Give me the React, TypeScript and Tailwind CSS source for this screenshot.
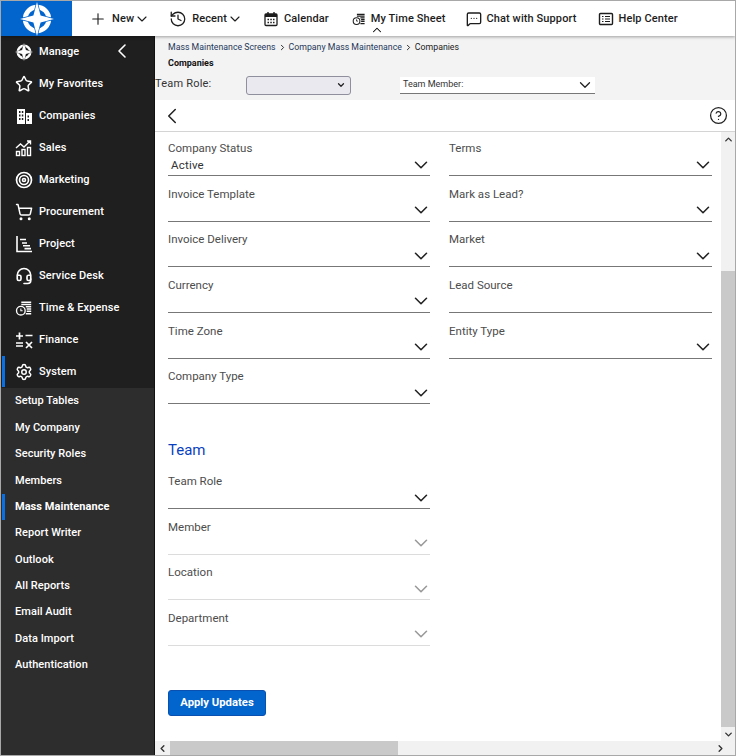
import {
  ChevronDown,
  ChevronLeft,
  ChevronRight,
  ChevronUp,
  CircleHelp,
  Headset,
  History,
  MessageSquareMore,
  Plus,
  Settings,
  ShoppingCart,
  Star,
  Target,
} from "lucide-react"

const font = { fontFamily: "Roboto, sans-serif" }

function Logo({ size, bg }: { size: number; bg: string }) {
  return (
    <svg width={size} height={size} viewBox="-18 -18 36 36">
      <circle r="12.5" fill="none" stroke="#fff" strokeWidth="5" />
      <path d="M0 -16V16M-16 0H16" stroke={bg} strokeWidth="2.4" />
      <path
        d="M0 -18 L3.8 -3.8 L18 0 L3.8 3.8 L0 18 L-3.8 3.8 L-18 0 L-3.8 -3.8 Z"
        fill="#fff"
        stroke={bg}
        strokeWidth="1.4"
        paintOrder="stroke"
      />
    </svg>
  )
}

function TimeIcon({ size = 20 }: { size?: number }) {
  return (
    <svg width={size} height={size} viewBox="0 0 20 20" fill="none" stroke="currentColor" strokeWidth="1.5">
      <circle cx="6.5" cy="13" r="4.8" />
      <path d="M6.5 10.5V13h2" strokeWidth="1.2" />
      <path d="M7 3.5h11M7 6h11M12 8.5h6M13 11h5M13 13.5h5M12 16.5h6" strokeWidth="1.7" />
    </svg>
  )
}

function CalendarIcon() {
  return (
    <svg width="16" height="16" viewBox="0 0 16 16" fill="none" stroke="currentColor" strokeWidth="1.3">
      <rect x="2" y="3" width="12" height="11.5" rx="1" />
      <path d="M2 4.5h12" strokeWidth="3" />
      <path d="M5 1v3M11 1v3" strokeWidth="1.4" />
      <path d="M4.5 8.5h1.5M7.3 8.5h1.5M10 8.5h1.5M4.5 11.5h1.5M7.3 11.5h1.5M10 11.5h1.5" strokeWidth="1.3" />
    </svg>
  )
}

function ListBoxIcon() {
  return (
    <svg width="16" height="16" viewBox="0 0 16 16" fill="none" stroke="currentColor" strokeWidth="1.4">
      <rect x="1.5" y="2.5" width="13" height="11" rx="1" />
      <path d="M4 5.5h1.5M7 5.5h5M4 8h1.5M7 8h5M4 10.5h1.5M7 10.5h5" strokeWidth="1.2" />
    </svg>
  )
}

function CompaniesIcon() {
  return (
    <svg width="17" height="17" viewBox="0 0 17 17" fill="#fff">
      <path fillRule="evenodd" d="M1 1h8v15H1z M3 3v2h1.5V3z M5.8 3v2h1.5V3z M3 6.5v2h1.5v-2z M5.8 6.5v2h1.5v-2z M3 10v2h1.5v-2z M5.8 10v2h1.5v-2z" />
      <path fillRule="evenodd" d="M10 5h6v11h-6z M11.5 7.5v2H13v-2z M11.5 11v2H13v-2z" />
    </svg>
  )
}

function SalesIcon() {
  return (
    <svg width="18" height="18" viewBox="0 0 18 18" fill="none" stroke="#fff" strokeWidth="1.4">
      <path d="M1 9l4.5-4 3.5 3 6-6M12 2h3.5v3.5" />
      <rect x="1.5" y="12.5" width="3" height="4" />
      <rect x="7" y="10.5" width="3" height="6" />
      <rect x="12.5" y="8.5" width="3" height="8" />
    </svg>
  )
}

function ProjectIcon() {
  return (
    <svg width="18" height="18" viewBox="0 0 18 18" fill="none" stroke="#fff" strokeWidth="1.6">
      <path d="M2 1v15.5h15" />
      <path d="M5 4.5h6M7 8h5M8 10.8h7M9.5 13.6h6.5" />
    </svg>
  )
}

function FinanceIcon() {
  return (
    <svg width="18" height="18" viewBox="0 0 18 18" fill="none" stroke="#fff" strokeWidth="1.7">
      <path d="M1 5h7M4.5 1.5v7M10.5 4.5h7M1 12h7M1 15h7M11 11l6 6M17 11l-6 6" />
    </svg>
  )
}

const mainMenu = [
  { label: "Manage", icon: <Logo size={18} bg="#1f1f1f" /> },
  { label: "My Favorites", icon: <Star size={18} color="#fff" strokeWidth={2} /> },
  { label: "Companies", icon: <CompaniesIcon /> },
  { label: "Sales", icon: <SalesIcon /> },
  { label: "Marketing", icon: <Target size={18} color="#fff" strokeWidth={2.2} /> },
  { label: "Procurement", icon: <ShoppingCart size={18} color="#fff" strokeWidth={2} /> },
  { label: "Project", icon: <ProjectIcon /> },
  { label: "Service Desk", icon: <Headset size={18} color="#fff" strokeWidth={2.2} /> },
  { label: "Time & Expense", icon: <span className="text-white"><TimeIcon size={18} /></span> },
  { label: "Finance", icon: <FinanceIcon /> },
  { label: "System", icon: <Settings size={18} color="#fff" strokeWidth={2} /> },
]

const subMenu = [
  "Setup Tables",
  "My Company",
  "Security Roles",
  "Members",
  "Mass Maintenance",
  "Report Writer",
  "Outlook",
  "All Reports",
  "Email Audit",
  "Data Import",
  "Authentication",
]

function NavItem({ icon, label, chevron }: { icon: React.ReactNode; label: string; chevron?: boolean }) {
  return (
    <div className="flex items-center h-8 text-white text-[11px] tracking-[0.1px] font-medium">
      <div className="w-[22px] flex justify-center">{icon}</div>
      <span className="ml-[4px]">{label}</span>
      {chevron && (
        <div className="ml-auto mr-[20px] -mt-[3px]">
          <ChevronLeft size={24} strokeWidth={1.6} color="#fff" />
        </div>
      )}
    </div>
  )
}

function Sidebar() {
  return (
    <aside className="w-[154px] flex flex-col bg-[#2d2d2d] border-r border-[#111] shrink-0">
      <div className="bg-[#1f1f1f] h-[352px]">
        {mainMenu.map((m, i) => (
          <div key={m.label} className={i === 10 ? "relative pl-[12px]" : "pl-[12px]"}>
            {i === 10 && <div className="absolute left-[1px] top-0 bottom-[1px] w-[3px] bg-[#0a6fe0]" />}
            <NavItem icon={m.icon} label={m.label} chevron={i === 0} />
          </div>
        ))}
      </div>
      <div className="pt-[0.4px]">
        {subMenu.map((s) => (
          <div
            key={s}
            className={
              s === "Mass Maintenance"
                ? "relative h-[26.4px] flex items-center pl-[14px] text-white text-[11px] tracking-[0.05px] font-bold"
                : "h-[26.4px] flex items-center pl-[14px] text-white text-[11px] tracking-[0.05px] font-medium"
            }
          >
            {s === "Mass Maintenance" && <div className="absolute left-[1px] top-0 bottom-0 w-[3px] bg-[#0a6fe0]" />}
            {s}
          </div>
        ))}
      </div>
    </aside>
  )
}

function TopItem({ icon, label, arrow }: { icon: React.ReactNode; label: string; arrow?: boolean }) {
  return (
    <div className="flex items-center gap-[5px] text-[#1d1d1d] text-[11px] tracking-[0.1px] font-medium">
      {icon}
      <span className="pt-[2px]">{label}</span>
      {arrow && <ChevronDown size={16} strokeWidth={1.7} className="-ml-[5px]" />}
    </div>
  )
}

function Header() {
  return (
    <header className="h-[35px] flex items-center bg-white shadow-[0_1px_3px_rgba(0,0,0,0.35)] relative z-10 shrink-0">
      <div className="w-[71px] h-full bg-[#0264cd] flex items-center justify-center">
        <Logo size={34} bg="#0264cd" />
      </div>
      <div className="flex items-center ml-[17px]">
        <TopItem icon={<Plus size={18} strokeWidth={1.5} />} label="New" arrow />
        <div className="ml-[19px]">
          <TopItem icon={<History size={18} strokeWidth={1.7} />} label="Recent" arrow />
        </div>
        <div className="ml-[20px]">
          <TopItem icon={<CalendarIcon />} label="Calendar" />
        </div>
        <div className="relative ml-[23px]">
          <TopItem icon={<TimeIcon size={14} />} label="My Time Sheet" />
          <ChevronUp size={14} strokeWidth={1.8} className="absolute left-[18px] top-[14px]" />
        </div>
        <div className="ml-[20px]">
          <TopItem icon={<MessageSquareMore size={16} strokeWidth={2} />} label="Chat with Support" />
        </div>
        <div className="ml-[21px]">
          <TopItem icon={<ListBoxIcon />} label="Help Center" />
        </div>
      </div>
    </header>
  )
}

function Field({ label, value, kind = "dark", noArrow }: { label: string; value?: string; kind?: "dark" | "light"; noArrow?: boolean }) {
  return (
    <div className="h-[45.6px]">
      <div className="text-[#4d4d4d] text-[11.5px] leading-[14px] pt-[9px] h-[23px]">{label}</div>
      <div
        className={
          kind === "dark"
            ? "h-[21px] border-b border-[#777] flex items-center pl-[3px] text-[#333] text-[11.5px] tracking-[0.2px]"
            : "h-[21px] border-b border-[#dcdcdc] flex items-center pl-[3px] text-[#333] text-[11.5px]"
        }
      >
        <span>{value}</span>
        {!noArrow && (
          <ChevronDown
            size={22}
            strokeWidth={1.7}
            className={kind === "dark" ? "ml-auto -mr-[2px] -mt-[1px] text-[#222]" : "ml-auto -mr-[2px] -mt-[1px] text-[#999]"}
          />
        )}
      </div>
    </div>
  )
}

function Form() {
  return (
    <div className="flex-1 flex flex-col min-h-0 min-w-0">
      <div className="flex-1 flex min-h-0">
        <div className="flex-1 pl-[13px] pr-[10px] pt-[0.2px] overflow-hidden">
          <div className="grid grid-cols-[262px_263px] gap-x-[19px]">
            <div>
              <Field label="Company Status" value="Active" />
              <Field label="Invoice Template" />
              <Field label="Invoice Delivery" />
              <Field label="Currency" />
              <Field label="Time Zone" />
              <Field label="Company Type" />
            </div>
            <div>
              <Field label="Terms" />
              <Field label="Mark as Lead?" />
              <Field label="Market" />
              <Field label="Lead Source" noArrow />
              <Field label="Entity Type" />
            </div>
          </div>
          <h2 className="text-[#0a3fc0] text-[15px] mt-[34px] leading-[20px] h-[25.4px]">Team</h2>
          <div className="w-[262px]">
            <Field label="Team Role" />
            <Field label="Member" kind="light" />
            <Field label="Location" kind="light" />
            <Field label="Department" kind="light" />
          </div>
          <button className="mt-[42.6px] w-[98px] h-[26px] bg-[#0264cd] border border-[#0a50b0] rounded-[3px] text-white text-[11.3px] font-bold">
            Apply Updates
          </button>
        </div>
        <div className="w-[14px] flex flex-col bg-[#f1f1f1] shrink-0">
          <div className="h-[14px] flex items-center justify-center">
            <ChevronUp size={11} strokeWidth={3} className="text-[#333]" />
          </div>
          <div className="flex-1" />
          <div className="h-[456px] bg-[#c9c9c9]" />
          <div className="h-[14px] flex items-center justify-center">
            <ChevronDown size={11} strokeWidth={3} className="text-[#333]" />
          </div>
        </div>
      </div>
      <div className="h-[14px] flex items-center bg-[#f1f1f1] shrink-0">
        <div className="w-[15px] flex justify-center">
          <ChevronLeft size={11} strokeWidth={3} className="text-[#333]" />
        </div>
        <div className="w-[228px] h-full bg-[#c9c9c9]" />
        <div className="ml-auto w-[30px] flex justify-center">
          <ChevronRight size={11} strokeWidth={3} className="text-[#333]" />
        </div>
      </div>
    </div>
  )
}

function Content() {
  return (
    <main className="flex-1 flex flex-col min-w-0 bg-white">
      <div className="h-[64px] bg-[#f3f3f3] shrink-0">
        <div className="flex items-center h-[22px] pl-[13px] pt-[1px] gap-[2px] text-[8.75px] text-[#26385a]">
          <span>Mass Maintenance Screens</span>
          <ChevronRight size={9} strokeWidth={2.5} className="text-[#222]" />
          <span>Company Mass Maintenance</span>
          <ChevronRight size={9} strokeWidth={2.5} className="text-[#222]" />
          <span className="text-[#222]">Companies</span>
        </div>
        <div className="pl-[13px] text-[9px] font-bold text-[#111] leading-[11px]">Companies</div>
        <div className="flex items-center h-[24px] mt-[4px]">
          <span className="w-[91px] -mt-[2px] text-[11px] text-[#333] tracking-[0.2px]">Team Role:</span>
          <div className="w-[105px] h-[19px] bg-[#e9e9ef] border border-[#8f8f9d] rounded-[3px] flex items-center justify-end pr-[4px]">
            <ChevronDown size={10} strokeWidth={3} className="text-[#222]" />
          </div>
          <div className="ml-[49px] w-[195px] h-[17px] bg-white border-b border-[#777] flex items-center pl-[3px] pr-[1px] text-[9px] text-[#333]">
            <span>Team Member:</span>
            <ChevronDown size={18} strokeWidth={1.7} className="ml-auto text-[#222]" />
          </div>
        </div>
      </div>
      <div className="h-[32px] flex items-center justify-between border-b border-[#d4d4d4] pl-[4px] pr-[7px] shrink-0">
        <ChevronLeft size={26} strokeWidth={1.4} className="text-[#222]" />
        <CircleHelp size={19} strokeWidth={1.6} className="text-[#222]" />
      </div>
      <Form />
    </main>
  )
}

export default function App() {
  return (
    <div style={font} className="w-[736px] h-[756px] border border-[#a8a8a8] flex flex-col overflow-hidden bg-white">
      <Header />
      <div className="flex-1 flex min-h-0">
        <Sidebar />
        <Content />
      </div>
    </div>
  )
}
